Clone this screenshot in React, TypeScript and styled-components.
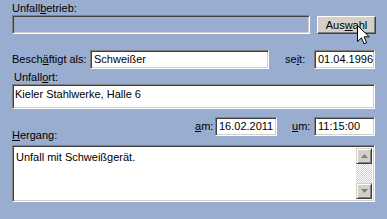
import React from 'react';
import styled, { createGlobalStyle, css } from 'styled-components';

const GlobalStyle = createGlobalStyle`
  html, body {
    margin: 0;
    padding: 0;
    background: #98adcf;
  }
  body {
    font-family: "Liberation Sans", Arial, sans-serif;
    font-size: 11px;
    color: #000;
  }
`;

const sunken = css`
  box-sizing: border-box;
  border: 1px solid;
  border-color: #808080 #ffffff #ffffff #808080;
  box-shadow: inset 1px 1px 0 #404040, inset -1px -1px 0 #d4d0c8;
`;

const Form = styled.div`
  width: 363px;
  height: 217px;
  padding: 2px 12px 0;
  display: flex;
  flex-direction: column;
`;

const Row = styled.div<{ $mt?: number; $gap?: number; $align?: string }>`
  display: flex;
  align-items: ${p => p.$align ?? 'center'};
  gap: ${p => p.$gap ?? 0}px;
  margin-top: ${p => p.$mt ?? 0}px;
`;

const Label = styled.label<{ $w?: number; $indent?: number; $mt?: number }>`
  display: block;
  flex: none;
  height: 13px;
  line-height: 13px;
  white-space: nowrap;
  width: ${p => (p.$w ? `${p.$w}px` : 'auto')};
  padding-left: ${p => p.$indent ?? 0}px;
  margin-top: ${p => p.$mt ?? 0}px;
  u {
    text-decoration: underline;
    text-underline-offset: 1px;
  }
`;

const Field = styled.div<{ $w?: number; $h: number; $disabled?: boolean; $top?: boolean }>`
  ${sunken};
  flex: none;
  width: ${p => (p.$w ? `${p.$w}px` : '100%')};
  height: ${p => p.$h}px;
  background: ${p => (p.$disabled ? 'transparent' : '#ffffff')};
  display: flex;
  align-items: ${p => (p.$top ? 'flex-start' : 'center')};
  padding: ${p => (p.$top ? '3px 2px' : '0 3px')};
  line-height: 13px;
  white-space: nowrap;
  overflow: hidden;
`;

const ButtonWrap = styled.div`
  position: relative;
  flex: none;
`;

const Button = styled.button`
  box-sizing: border-box;
  width: 59px;
  height: 18px;
  padding: 0;
  margin: 0;
  font: inherit;
  color: #000;
  background: #d4d0c8;
  border: 1px solid;
  border-color: #ffffff #404040 #404040 #ffffff;
  box-shadow: inset -1px -1px 0 #808080;
  line-height: 14px;
  u {
    text-underline-offset: 1px;
  }
`;

const Cursor = styled.svg`
  position: absolute;
  left: 40px;
  top: 9px;
  pointer-events: none;
`;

const MemoBox = styled.div`
  ${sunken};
  margin-top: 3px;
  width: 100%;
  height: 57px;
  background: #ffffff;
  display: flex;
  padding: 2px;
`;

const MemoText = styled.div`
  flex: 1;
  padding: 3px 0 0 1px;
  line-height: 13px;
`;

const ScrollBar = styled.div`
  width: 16px;
  display: flex;
  flex-direction: column;
  background-color: #ffffff;
  background-image: repeating-conic-gradient(#d4d0c8 0 25%, #ffffff 0 50%);
  background-size: 2px 2px;
`;

const ScrollButton = styled.div`
  box-sizing: border-box;
  width: 16px;
  height: 16px;
  background: #d4d0c8;
  border: 1px solid;
  border-color: #d4d0c8 #404040 #404040 #d4d0c8;
  box-shadow: inset 1px 1px 0 #ffffff, inset -1px -1px 0 #808080;
  display: flex;
  align-items: center;
  justify-content: center;
`;

const Track = styled.div`
  flex: 1;
`;

const Arrow: React.FC<{ up?: boolean }> = ({ up }) => (
  <svg width="7" height="4" viewBox="0 0 7 4">
    <polygon points={up ? '3.5,0 7,4 0,4' : '0,0 7,0 3.5,4'} fill="#808080" />
  </svg>
);

const App: React.FC = () => (
  <>
    <GlobalStyle />
    <Form>
      <Label>
        Unfall<u>b</u>etrieb:
      </Label>
      <Row $gap={7}>
        <Field $w={298} $h={19} $disabled />
        <ButtonWrap>
          <Button>
            Aus<u>w</u>ahl
          </Button>
          <Cursor width="13" height="20" viewBox="0 0 13 20">
            <path
              d="M0.5 0.5 L0.5 16.5 L4.5 12.8 L7 18.8 L9.6 17.7 L7.1 11.8 L12.2 11.8 Z"
              fill="#ffffff"
              stroke="#000000"
              strokeWidth="1"
              strokeLinejoin="miter"
            />
          </Cursor>
        </ButtonWrap>
      </Row>

      <Row $mt={16}>
        <Label $w={78}>
          Besch<u>ä</u>ftigt als:
        </Label>
        <Field $w={179} $h={19}>Schweißer</Field>
        <Label $w={29} style={{ marginLeft: 16 }}>
          se<u>i</u>t:
        </Label>
        <Field $w={61} $h={19}>01.04.1996</Field>
      </Row>

      <Label $indent={2} $mt={2}>
        Unfall<u>o</u>rt:
      </Label>
      <Field $h={25} $top>
        Kieler Stahlwerke, Halle 6
      </Field>

      <Row $mt={8} $align="flex-start">
        <Label $mt={12}>
          <u>H</u>ergang:
        </Label>
        <Row style={{ marginLeft: 'auto' }}>
          <Label $w={20}>
            <u>a</u>m:
          </Label>
          <Field $w={62} $h={19}>16.02.2011</Field>
          <Label $w={22} style={{ marginLeft: 15 }}>
            <u>u</u>m:
          </Label>
          <Field $w={61} $h={19}>11:15:00</Field>
        </Row>
      </Row>

      <MemoBox>
        <MemoText>Unfall mit Schweißgerät.</MemoText>
        <ScrollBar>
          <ScrollButton>
            <Arrow up />
          </ScrollButton>
          <Track />
          <ScrollButton>
            <Arrow />
          </ScrollButton>
        </ScrollBar>
      </MemoBox>
    </Form>
  </>
);

export default App;
